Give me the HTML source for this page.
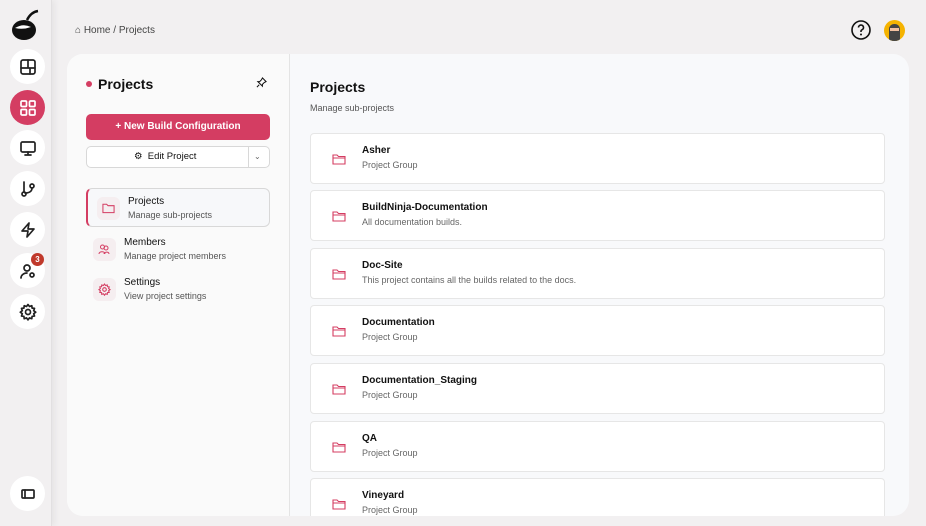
<!DOCTYPE html><html><head><style>
*{box-sizing:border-box;margin:0;padding:0}
body{width:926px;height:526px;overflow:hidden;background:#f2f0f1;font-family:"Liberation Sans",sans-serif;position:relative;color:#111}
.sb{position:absolute;left:0;top:0;width:52px;height:526px;background:#f2f0f1;border-right:1px solid #e2e0e1;box-shadow:3px 0 6px rgba(0,0,0,.05)}
.ic{position:absolute;left:10px;width:35px;height:35px;border-radius:50%;background:#fff;display:flex;align-items:center;justify-content:center}
.ic svg{width:18px;height:18px;fill:none;stroke:#222;stroke-width:1.7;stroke-linecap:round;stroke-linejoin:round}
.act{background:#d43d62}.act svg{stroke:#fff}
.bc{position:absolute;left:75px;top:25px;font-size:10px;color:#444}
.panel{position:absolute;left:67px;top:54px;width:842px;height:462px;border-radius:16px;overflow:hidden;background:#f8f9fb}
.lp{position:absolute;left:0;top:0;width:223px;height:462px;background:#fafafa;border-right:1px solid #e4e4e4}
.card{position:absolute;left:243px;width:575px;height:51px;background:#fff;border:1px solid #e6e6e6;border-radius:4px}
.card svg{position:absolute;left:21px;top:19px;width:14px;height:12px}
.card b{position:absolute;left:51px;top:11px;font-size:10px;font-weight:bold;color:#111}
.card span{position:absolute;left:51px;top:26px;font-size:9px;color:#666}
.nav{position:absolute;left:19px;width:184px;height:39px}
.nav .sq{position:absolute;left:9px;top:8px;width:23px;height:23px;border-radius:6px;background:#f5eef0}
.nav .sq svg{position:absolute;left:5px;top:5px}
.nav b{position:absolute;left:40px;top:7px;font-size:10px;font-weight:normal;color:#111}
.nav .t{position:absolute;left:40px;top:21px;font-size:9px;color:#555}
</style></head><body>
<div class="sb">
<svg style="position:absolute;left:11px;top:8px" width="30" height="34" viewBox="0 0 30 34"><ellipse cx="13" cy="22" rx="12" ry="10" fill="#111"/><path d="M16 12 Q20 4 27 3" stroke="#111" stroke-width="2.5" fill="none"/><path d="M4 20 Q12 15 20 19 Q12 22 4 20Z" fill="#fff"/></svg>
<div class="ic" style="top:49px"><svg viewBox="0 0 18 18"><rect x="2" y="2" width="14" height="14" rx="2"/><path d="M2 10h14M9 2v8M11 10v6"/></svg></div>
<div class="ic act" style="top:90px"><svg viewBox="0 0 18 18"><rect x="2" y="2" width="5.5" height="5.5" rx="1"/><rect x="10.5" y="2" width="5.5" height="5.5" rx="1"/><rect x="2" y="10.5" width="5.5" height="5.5" rx="1"/><rect x="10.5" y="10.5" width="5.5" height="5.5" rx="1"/></svg></div>
<div class="ic" style="top:130px"><svg viewBox="0 0 18 18"><rect x="2" y="3" width="14" height="10" rx="1.5"/><path d="M9 13v3M6 16h6"/></svg></div>
<div class="ic" style="top:171px"><svg viewBox="0 0 18 18"><circle cx="5" cy="14" r="2"/><circle cx="13" cy="6" r="2"/><path d="M5 2v10M13 8c0 4-4 5-7 5"/></svg></div>
<div class="ic" style="top:212px"><svg viewBox="0 0 18 18"><path d="M10 2L3 10h6l-1 6 7-8H9z"/></svg></div>
<div class="ic" style="top:253px"><svg viewBox="0 0 18 18"><circle cx="8" cy="6" r="3"/><path d="M2 16c0-3 3-5 6-5"/><circle cx="13" cy="13" r="2"/></svg></div>
<div style="position:absolute;left:31px;top:253px;width:13px;height:13px;border-radius:50%;background:#c0392b;color:#fff;font-size:8px;font-weight:bold;text-align:center;line-height:13px">3</div>
<div class="ic" style="top:294px"><svg viewBox="0 0 18 18"><circle cx="9" cy="9" r="2.5"/><path d="M9 1.5l1.5 2 2.3-.8.3 2.4 2.4.3-.8 2.3 2 1.5-2 1.5.8 2.3-2.4.3-.3 2.4-2.3-.8-1.5 2-1.5-2-2.3.8-.3-2.4-2.4-.3.8-2.3-2-1.5 2-1.5-.8-2.3 2.4-.3.3-2.4 2.3.8z"/></svg></div>
<div class="ic" style="top:476px"><svg viewBox="0 0 18 18"><rect x="3" y="5" width="12" height="8" rx="1"/><path d="M6 5v8"/></svg></div>
</div>
<div class="bc">⌂ Home / Projects</div>
<svg style="position:absolute;left:851px;top:20px" width="20" height="20" viewBox="0 0 20 20"><circle cx="10" cy="10" r="9" fill="none" stroke="#111" stroke-width="1.6"/><path d="M7.5 7.5a2.5 2.5 0 1 1 3.5 2.3c-.7.3-1 .8-1 1.5v.7" fill="none" stroke="#111" stroke-width="1.6"/><circle cx="10" cy="14.5" r="1" fill="#111"/></svg>
<div style="position:absolute;left:884px;top:20px;width:21px;height:21px;border-radius:50%;background:#f5b301;overflow:hidden"><div style="position:absolute;left:5px;top:4px;width:11px;height:17px;border-radius:5px 5px 0 0;background:#444"></div><div style="position:absolute;left:6px;top:8px;width:9px;height:3px;background:#f2c0a0"></div></div>
<div class="panel">
<div class="lp">
<div style="position:absolute;left:19px;top:27px;width:6px;height:6px;border-radius:50%;background:#d43d62"></div>
<div style="position:absolute;left:31px;top:22px;font-size:14px;font-weight:bold">Projects</div>
<svg style="position:absolute;left:189px;top:23px" width="11" height="11" viewBox="0 0 12 12" fill="none" stroke="#111" stroke-width="1.1"><path d="M7 1l4 4-2 1-2 2 0 2-5-5 2 0 2-2z M3.5 8.5L1 11"/></svg>
<div style="position:absolute;left:19px;top:60px;width:184px;height:26px;background:#d43d62;border-radius:5px;color:#fff;font-size:10px;font-weight:bold;text-align:center;line-height:26px">+ New Build Configuration</div>
<div style="position:absolute;left:19px;top:92px;width:184px;height:22px;background:#fff;border:1px solid #d8d8d8;border-radius:5px;font-size:9.5px;line-height:20px"><span style="position:absolute;left:47px">⚙&nbsp; Edit Project</span><div style="position:absolute;left:161px;top:0;width:1px;height:20px;background:#d8d8d8"></div><span style="position:absolute;left:167px;color:#666;font-size:8px">⌄</span></div>
<div class="nav" style="top:134px;background:#f7f8fa;border:1px solid #d8d8d8;border-left:2px solid #d43d62;border-radius:6px"><div class="sq"><svg width="13" height="12" viewBox="0 0 14 12"><path d="M1 2h4l1.5 1.5H13V11H1z" fill="none" stroke="#d43d62" stroke-width="1.1"/></svg></div><b>Projects</b><span class="t">Manage sub-projects</span></div>
<div class="nav" style="top:176px"><div class="sq" style="left:7px"><svg width="12" height="12" viewBox="0 0 12 12" fill="none" stroke="#d43d62" stroke-width="1"><circle cx="4.5" cy="4" r="2"/><circle cx="8" cy="5" r="2"/><path d="M1 11c0-3 6-3 6 0M6 11c0-2 5-3 5 0"/></svg></div><b style="left:38px">Members</b><span class="t" style="left:38px">Manage project members</span></div>
<div class="nav" style="top:216px"><div class="sq" style="left:7px"><svg width="13" height="13" viewBox="0 0 18 18" fill="none" stroke="#d43d62" stroke-width="1.5"><circle cx="9" cy="9" r="2.5"/><path d="M9 1.5l1.5 2 2.3-.8.3 2.4 2.4.3-.8 2.3 2 1.5-2 1.5.8 2.3-2.4.3-.3 2.4-2.3-.8-1.5 2-1.5-2-2.3.8-.3-2.4-2.4-.3.8-2.3-2-1.5 2-1.5-.8-2.3 2.4-.3.3-2.4 2.3.8z"/></svg></div><b style="left:38px">Settings</b><span class="t" style="left:38px">View project settings</span></div>
</div>
<div style="position:absolute;left:243px;top:25px;font-size:14px;font-weight:bold">Projects</div>
<div style="position:absolute;left:243px;top:49px;font-size:9px;color:#555">Manage sub-projects</div>
<div class="card" style="top:79px"><svg viewBox="0 0 14 12"><path d="M1 2h4l1.5 1.5H13V11H1zM1 5h12" fill="none" stroke="#d43d62" stroke-width="1.1"/></svg><b>Asher</b><span>Project Group</span></div>
<div class="card" style="top:136px"><svg viewBox="0 0 14 12"><path d="M1 2h4l1.5 1.5H13V11H1zM1 5h12" fill="none" stroke="#d43d62" stroke-width="1.1"/></svg><b>BuildNinja-Documentation</b><span>All documentation builds.</span></div>
<div class="card" style="top:194px"><svg viewBox="0 0 14 12"><path d="M1 2h4l1.5 1.5H13V11H1zM1 5h12" fill="none" stroke="#d43d62" stroke-width="1.1"/></svg><b>Doc-Site</b><span>This project contains all the builds related to the docs.</span></div>
<div class="card" style="top:251px"><svg viewBox="0 0 14 12"><path d="M1 2h4l1.5 1.5H13V11H1zM1 5h12" fill="none" stroke="#d43d62" stroke-width="1.1"/></svg><b>Documentation</b><span>Project Group</span></div>
<div class="card" style="top:309px"><svg viewBox="0 0 14 12"><path d="M1 2h4l1.5 1.5H13V11H1zM1 5h12" fill="none" stroke="#d43d62" stroke-width="1.1"/></svg><b>Documentation_Staging</b><span>Project Group</span></div>
<div class="card" style="top:367px"><svg viewBox="0 0 14 12"><path d="M1 2h4l1.5 1.5H13V11H1zM1 5h12" fill="none" stroke="#d43d62" stroke-width="1.1"/></svg><b>QA</b><span>Project Group</span></div>
<div class="card" style="top:424px"><svg viewBox="0 0 14 12"><path d="M1 2h4l1.5 1.5H13V11H1zM1 5h12" fill="none" stroke="#d43d62" stroke-width="1.1"/></svg><b>Vineyard</b><span>Project Group</span></div>
</div>
</body></html>
